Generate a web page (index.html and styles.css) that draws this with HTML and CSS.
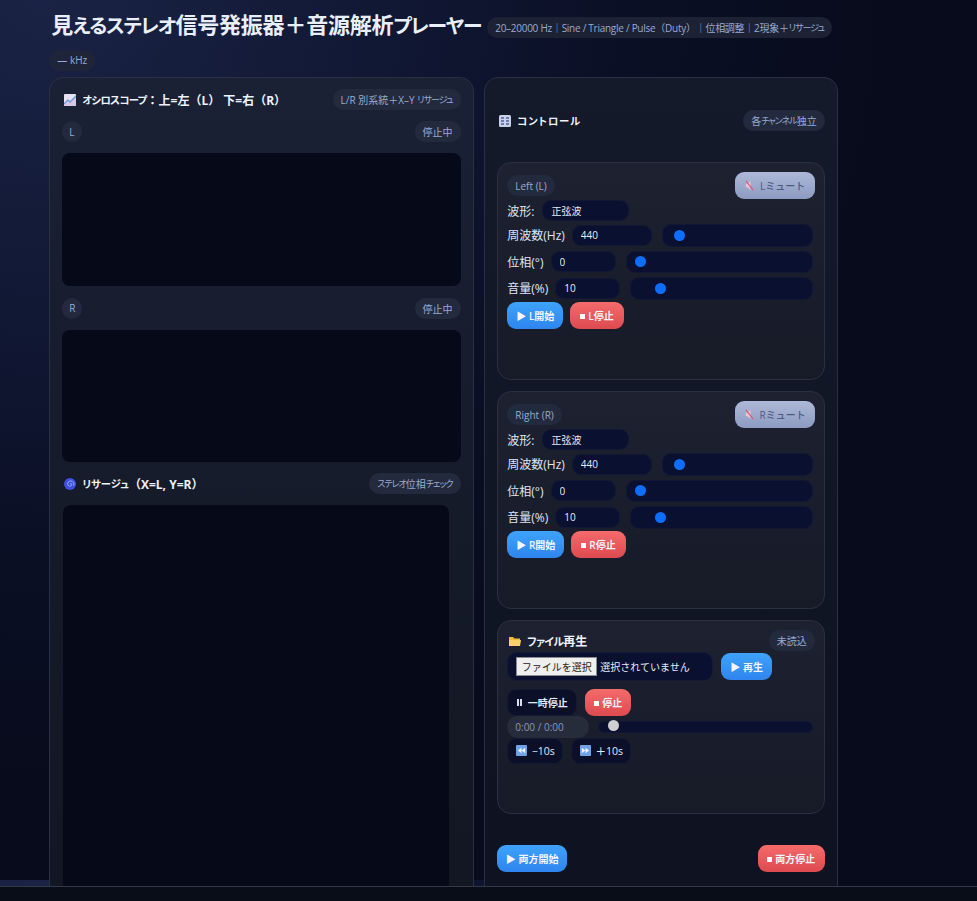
FILE: index.html
```html
<!DOCTYPE html>
<html lang="ja">
<head>
<meta charset="utf-8">
<title>見えるステレオ信号発振器＋音源解析プレーヤー</title>
<link rel="stylesheet" href="styles.css">
</head>
<body>
<div class="viewport">
  <div class="page">
    <header class="head">
      <div class="head-top">
        <h1>見<span class="k">える</span><span class="k">ステレオ</span>信号発振器＋音源解析<span class="k">プレーヤー</span></h1>
        <span class="pill top-pill">20–20000 Hz｜Sine / Triangle / Pulse（Duty）｜位相調整｜2現象＋<span class="k">リサージュ</span></span>
      </div>
      <span class="pill">— kHz</span>
    </header>
    <main class="grid">
      <section class="card scope">
        <div class="title-row first">
          <h2><svg class="ico" viewBox="0 0 12 12"><rect width="12" height="12" rx="1" fill="#e6e2f2"/><path d="M0 12V10L4 6l2 2 6-6v10z" fill="#d7c7e6"/><path d="M0 10 4 6l2 2 6-6" fill="none" stroke="#6f9bd8" stroke-width="1.3"/></svg><span class="k">オシロスコープ</span>：上=左（L） 下=右（R）</h2>
          <span class="pill">L/R 別系統＋X–Y <span class="k">リサージュ</span></span>
        </div>
        <div class="chan-row"><span class="pill">L</span><span class="pill">停止中</span></div>
        <div class="canvas wave"></div>
        <div class="chan-row second"><span class="pill">R</span><span class="pill">停止中</span></div>
        <div class="canvas wave"></div>
        <div class="title-row liss-title">
          <h2><svg class="ico" viewBox="0 0 12 12"><circle cx="6" cy="6" r="6" fill="#3f4fe0"/><path d="M6 6c1-1 2 0 1.500 1.200C7 8.500 4.500 8.500 3.800 6.800 3 4.800 4.800 2.800 7 3c2.200.2 3.500 2.400 2.800 4.500" fill="none" stroke="#8fb4f5" stroke-width="1"/></svg><span class="k wide">リサージュ</span>（X=L, Y=R）</h2>
          <span class="pill"><span class="k">ステレオ</span>位相<span class="k">チェック</span></span>
        </div>
        <div class="canvas liss"></div>
      </section>

      <section class="card controls">
        <div class="title-row ctl-title">
          <h2><svg class="ico" viewBox="0 0 12 12"><rect width="12" height="12" rx="1.500" fill="#c9d2e8"/><g fill="#6a7fb0"><rect x="2" y="2" width="3" height="2"/><rect x="7" y="2" width="3" height="2"/><rect x="2" y="5" width="3" height="2"/><rect x="7" y="5" width="3" height="2"/><rect x="2" y="8" width="3" height="2"/><rect x="7" y="8" width="3" height="2"/></g></svg><span class="k wider">コントロール</span></h2>
          <span class="pill">各<span class="k">チャンネル</span>独立</span>
        </div>

        <div class="panel chan">
          <div class="panel-head">
            <span class="pill">Left (L)</span>
            <button class="btn mute"><svg class="ico-s" viewBox="0 0 12 12"><path d="M2 4h2l3-3v10L4 8H2z" fill="#f0c4d4"/><path d="M2 1l8 10" stroke="#d85a6a" stroke-width="1.200"/></svg>Lミュート</button>
          </div>
          <div class="row select-row"><label>波形:</label><select class="field sel"><option>正弦波</option></select></div>
          <div class="row"><label>周波数(Hz)</label><input class="field w80" value="440"><input class="range" type="range" min="0" max="100" value="3"></div>
          <div class="row"><label>位相(°)</label><input class="field w65" value="0"><input class="range" type="range" min="0" max="100" value="0"></div>
          <div class="row"><label>音量(%)</label><input class="field w65" value="10"><input class="range" type="range" min="0" max="100" value="10"></div>
          <div class="actions"><button class="btn blue">▶ L開始</button><button class="btn red"><i class="sq"></i>L停止</button></div>
        </div>

        <div class="panel chan">
          <div class="panel-head">
            <span class="pill">Right (R)</span>
            <button class="btn mute"><svg class="ico-s" viewBox="0 0 12 12"><path d="M2 4h2l3-3v10L4 8H2z" fill="#f0c4d4"/><path d="M2 1l8 10" stroke="#d85a6a" stroke-width="1.200"/></svg>Rミュート</button>
          </div>
          <div class="row select-row"><label>波形:</label><select class="field sel"><option>正弦波</option></select></div>
          <div class="row"><label>周波数(Hz)</label><input class="field w80" value="440"><input class="range" type="range" min="0" max="100" value="3"></div>
          <div class="row"><label>位相(°)</label><input class="field w65" value="0"><input class="range" type="range" min="0" max="100" value="0"></div>
          <div class="row"><label>音量(%)</label><input class="field w65" value="10"><input class="range" type="range" min="0" max="100" value="10"></div>
          <div class="actions"><button class="btn blue">▶ R開始</button><button class="btn red"><i class="sq"></i>R停止</button></div>
        </div>

        <div class="panel file">
          <div class="file-head">
            <h3><svg class="ico" viewBox="0 0 12 12"><path d="M0 2h4l1.500 1.500H11V11H0z" fill="#f6b93b"/><path d="M0 5h12l-1 6H0z" fill="#fdd26a"/></svg><span class="k">ファイル</span>再生</h3>
            <span class="pill">未読込</span>
          </div>
          <div class="file-row">
            <div class="file-box"><button class="choose">ファイルを選択</button><span>選択されていません</span></div>
            <button class="btn blue">▶ 再生</button>
          </div>
          <div class="file-row2"><button class="btn ghost"><i class="pause"></i>一時停止</button><button class="btn red"><i class="sq"></i>停止</button></div>
          <div class="seek-row"><span class="pill time">0:00 / 0:00</span><input class="range seek" type="range" min="0" max="100" value="0"></div>
          <div class="skip-row">
            <button class="btn ghost skip"><svg class="ico-s" viewBox="0 0 12 12"><rect width="12" height="12" rx="1" fill="#6fa3e8"/><path d="M6 3 2 6l4 3zM10 3 6 6l4 3z" fill="#eaf2ff"/></svg>−10s</button>
            <button class="btn ghost skip"><svg class="ico-s" viewBox="0 0 12 12"><rect width="12" height="12" rx="1" fill="#6fa3e8"/><path d="M2 3l4 3-4 3zM6 3l4 3-4 3z" fill="#eaf2ff"/></svg>＋10s</button>
          </div>
        </div>

        <div class="both"><button class="btn blue">▶ 両方開始</button><button class="btn red"><i class="sq"></i>両方停止</button></div>
      </section>
    </main>
  </div>
  <div class="scroll-bar"></div>
</div>
</body>
</html>
```

FILE: styles.css
```css
* { box-sizing: border-box; }
html, body { margin: 0; height: 100%; }
body {
  background: #0a0e1b;
  color: #e8edf8;
  font-family: "Open Sans", "Noto Sans CJK JP", sans-serif;
  overflow: hidden;
}
.viewport { height: 901px; display: flex; flex-direction: column; overflow: hidden; }
.page {
  height: 886px;
  flex: none;
  overflow: hidden;
  padding: 0 139px 0 49.300px;
  background: radial-gradient(ellipse 850px 780px at 40px 0, #1a2345 0%, #111834 40%, #0a0f25 70%, #070b1b 100%) 0 0 / 100% 880px repeat-y #070b1b;
}
.scroll-bar { flex: 1; background: #090d18; border-top: 1px solid #33384a; }

.k { font-feature-settings: "palt"; font-size: .9em; letter-spacing: -.06em; }
.k.wide { letter-spacing: 0; }
.k.wider { letter-spacing: .08em; }
.pill .k { letter-spacing: -.11em; }
.head { height: 77px; padding-top: 6px; }
.head-top { display: flex; align-items: flex-start; gap: 6px; height: 41px; white-space: nowrap; }
h1 { margin: 0 0 0 2px; font-size: 22px; line-height: 36px; font-weight: 700; color: #e9effa; white-space: nowrap; letter-spacing: -.2px; }
.pill {
  display: inline-flex; align-items: center; height: 21px; padding: 0 8px; border-radius: 999px;
  background: #242a3d; color: #98aad2; font-size: 10px; white-space: pre;
}
.top-pill { margin-top: 11px; letter-spacing: -.27px; background: #1c2134; flex: none; }
.head > .pill { background: #1f2539; }

.grid { display: flex; gap: 10.700px; align-items: flex-start; }
.card {
  border: 1px solid #2a3043; border-radius: 14px; padding: 0 12px;
  height: 900px; flex: none;
}
.scope { width: 424.300px; background: linear-gradient(180deg, #1a2135 0%, #151a28 55%, #121622 100%); }
.controls { width: 353.400px; background: linear-gradient(180deg, #141a2a 0%, #101523 60%, #0d1120 100%); }

.title-row { display: flex; align-items: center; justify-content: space-between; height: 21px; }
.title-row.first { margin-top: 11px; }
h2 { margin: 0; font-size: 12px; font-weight: 700; display: flex; align-items: center; color: #eef2fb; white-space: pre; }
h2 .k { font-size: .86em; }
h3 { margin: 0; font-size: 12px; font-weight: 700; display: flex; align-items: center; color: #eef2fb; }
.ico { width: 12px; height: 12px; margin-right: 6px; margin-left: 2px; flex: none; }
.ico-s { width: 11px; height: 11px; margin-right: 5px; flex: none; }

.chan-row { display: flex; justify-content: space-between; height: 21px; margin-top: 11px; }
.chan-row.second { margin-top: 12px; }
.chan-row .pill:first-child { padding: 0 7px; }
.canvas { background: #060a18; border-radius: 8px; }
.wave { height: 132.600px; margin-top: 11px; }
.liss-title { margin-top: 11px; }
.liss { width: 386px; height: 386px; margin: 11px 0 0 .7px; }

.ctl-title { margin-top: 32px; }
.panel {
  border: 1px solid #2a3040; border-radius: 14px; padding: 9px 9px 0;
  background: linear-gradient(180deg, #1d2130 0%, #171b28 100%);
  margin-top: 11px;
}
.chan { height: 218px; }
.ctl-title + .chan { margin-top: 31px; }
.file { height: 194px; }

.panel-head { display: flex; align-items: center; justify-content: space-between; height: 27px; }
.row { display: flex; align-items: center; height: 22.500px; margin-top: 4px; }
.select-row { height: 21px; margin-top: 1px; }
.select-row + .row { margin-top: 3px; }
label { font-size: 12px; color: #dfe6f4; margin-right: 7px; white-space: nowrap; }
.select-row label { margin-right: 8px; }
.field {
  border: 1px solid #121834; background: #0a1030; color: #e6ecf8; border-radius: 9px;
  font: inherit; font-size: 10px; height: 21px; padding: 0 8px; outline: none;
}
.sel { width: 87px; appearance: none; -webkit-appearance: none; }
.w80 { width: 80px; flex: none; }
.w65 { width: 65px; flex: none; }
.range {
  -webkit-appearance: none; appearance: none; flex: 1; min-width: 0; height: 22.500px; margin: 0 2px 0 10px;
  padding: 0 8px; background: #0a1030; border: 1px solid #121834; border-radius: 9px;
}
.range::-webkit-slider-runnable-track { background: transparent; height: 11px; }
.range::-webkit-slider-thumb { -webkit-appearance: none; width: 11px; height: 11px; border-radius: 50%; background: #0d6efd; border: 0; }

.btn {
  border: 0; height: 27px; padding: 0 10px; border-radius: 9px; font: inherit; font-size: 10px; font-weight: 600;
  display: inline-flex; align-items: center; white-space: nowrap; color: #f2f6ff;
}
.blue { background: linear-gradient(180deg, #3ea3fb 0%, #2e85ee 100%); padding: 0 9px; }
.red { background: linear-gradient(180deg, #f56b6b 0%, #dd4a50 100%); }
.mute { width: 80px; justify-content: center; color: #4d5b84; background: linear-gradient(180deg, #aeb9d8 0%, #8d9bc2 100%); font-weight: 500; }
.ghost { background: #0b1028; border: 1px solid #131a34; color: #e4eaf7; }
.sq { width: 5px; height: 5px; background: #fff; margin-right: 3px; margin-top: 2px; flex: none; }
.pause { width: 5px; height: 7px; border-left: 2px solid #d8deec; border-right: 2px solid #d8deec; margin-right: 6px; flex: none; }
.actions { display: flex; gap: 7px; margin-top: 2.500px; }

.file-head { display: flex; align-items: center; justify-content: space-between; height: 21px; }
.file-row { display: flex; align-items: center; gap: 8px; margin-top: 0.500px; }
.file-box {
  width: 206px; height: 29px; background: #0a1030; border: 1px solid #141a36; border-radius: 10px;
  display: flex; align-items: center; padding-left: 8px; font-size: 10px; color: #e6ecf8; white-space: nowrap;
}
.choose {
  width: 81px; height: 19px; padding: 0; margin-right: 3px; background: #efefef; color: #222;
  border: 1px solid #8a8a8a; font: inherit; font-size: 10px;
}
.file-row2 { display: flex; gap: 8px; margin-top: 8px; }
.file-row2 .ghost { width: 70px; justify-content: center; padding: 0; }
.file-row2 .red { width: 46px; justify-content: center; padding: 0; }
.seek-row { display: flex; align-items: center; height: 22px; }
.time { width: 82px; height: 22px; background: #272c3b; color: #8a97b8; }
.seek { height: 12px; padding: 0 9px; margin: 0 2px 0 9px; }
.seek::-webkit-slider-runnable-track { height: 11px; }
.seek::-webkit-slider-thumb { background: #cfcfcf; margin-top: -1px; }
.skip-row { display: flex; gap: 8px; }
.skip { height: 26px; font-weight: 500; font-size: 10.500px; justify-content: center; padding: 0; }
.skip:first-child { width: 56px; }
.skip:last-child { width: 60px; }

.both { display: flex; justify-content: space-between; margin-top: 31px; }
.both .blue { padding: 0 8.500px; }
.both .red { padding: 0 9.500px; }
```
